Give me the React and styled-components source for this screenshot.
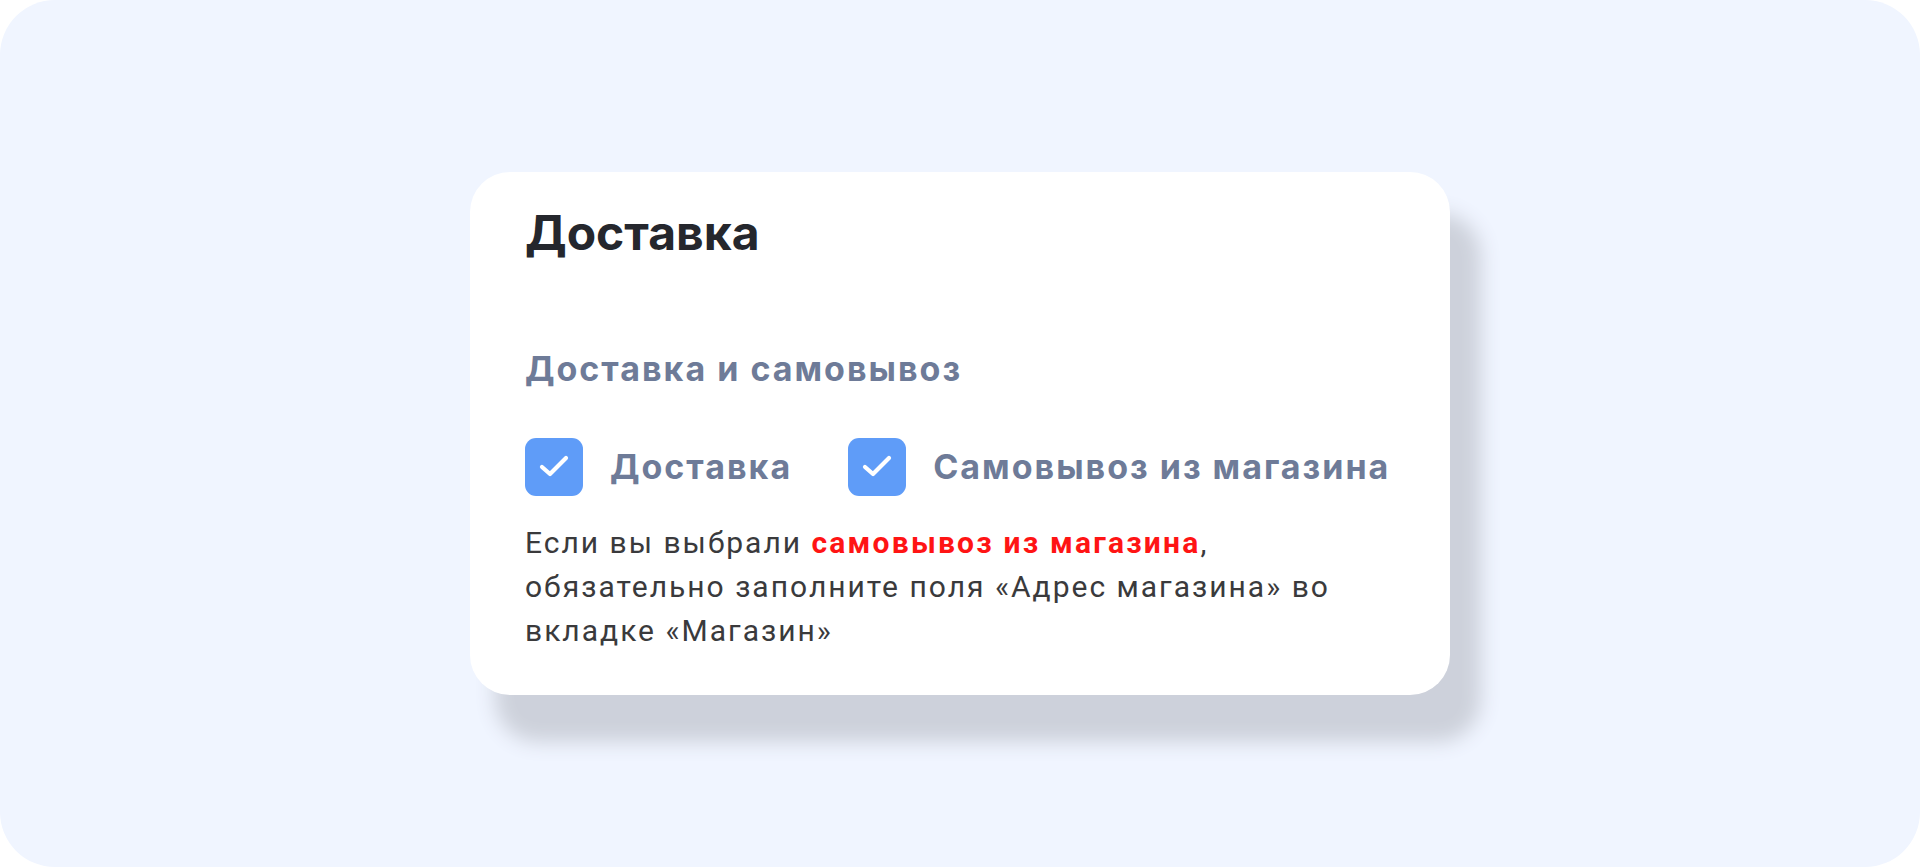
import React from "react";
import styled, { createGlobalStyle } from "styled-components";

const Global = createGlobalStyle`
  html, body { margin: 0; padding: 0; background: #ffffff; }
  body { font-family: Inter, "Noto Sans", sans-serif; }
  * { box-sizing: border-box; }
`;

const Panel = styled.div`
  width: 1920px;
  height: 867px;
  border-radius: 55px;
  background: #f0f5ff;
  display: flex;
  align-items: center;
  justify-content: center;
`;

const Card = styled.section`
  width: 980px;
  height: 523px;
  background: #ffffff;
  border-radius: 40px;
  padding: 32px 55px 0 55px;
  box-shadow: 28px 44px 20px 3px #cdd1db;
  display: flex;
  flex-direction: column;
`;

const Title = styled.h1`
  margin: 0;
  font-family: Inter, sans-serif;
  font-size: 48px;
  line-height: 58px;
  font-weight: 700;
  color: #25272d;
`;

const Subtitle = styled.h2`
  margin: 86px 0 0 0;
  font-family: Inter, sans-serif;
  font-size: 34px;
  line-height: 42px;
  letter-spacing: 2px;
  font-weight: 700;
  color: #6e7b98;
`;

const Options = styled.div`
  margin-top: 48px;
  display: flex;
  align-items: center;
  gap: 56px;
`;

const Option = styled.div`
  display: flex;
  align-items: center;
  gap: 27px;
  cursor: pointer;
`;

const Box = styled.div`
  width: 58px;
  height: 58px;
  border-radius: 11px;
  background: ${(p) => (p.$checked ? "#5f9cf8" : "#ffffff")};
  border: ${(p) => (p.$checked ? "none" : "2px solid #c5cde0")};
  display: flex;
  align-items: center;
  justify-content: center;
  flex-shrink: 0;
`;

const OptionText = styled.span`
  font-family: Inter, sans-serif;
  font-size: 34px;
  line-height: 42px;
  letter-spacing: 2px;
  font-weight: 700;
  color: #6e7b98;
`;

const Note = styled.p`
  margin: 25px 0 0 0;
  font-family: Roboto, "Liberation Sans", sans-serif;
  font-size: 30px;
  line-height: 44px;
  letter-spacing: 2px;
  font-weight: 400;
  color: #3a3a3c;
  max-width: 845px;
`;

const Highlight = styled.strong`
  font-weight: 700;
  letter-spacing: 2.2px;
  color: #ff1414;
`;

function Check() {
  return (
    <svg width="58" height="58" viewBox="0 0 58 58" fill="none">
      <polyline
        points="17,29 25,36 41,20"
        stroke="#ffffff"
        strokeWidth="4.2"
        strokeLinecap="round"
        strokeLinejoin="round"
      />
    </svg>
  );
}

function CheckOption({ label, checked }) {
  return (
    <Option role="checkbox" aria-checked={checked}>
      <Box $checked={checked}>{checked && <Check />}</Box>
      <OptionText>{label}</OptionText>
    </Option>
  );
}

export default function App() {
  return (
    <>
      <Global />
      <Panel>
        <Card>
          <Title>Доставка</Title>
          <Subtitle>Доставка и самовывоз</Subtitle>
          <Options>
            <CheckOption label="Доставка" checked />
            <CheckOption label="Самовывоз из магазина" checked />
          </Options>
          <Note>
            Если вы выбрали <Highlight>самовывоз из магазина</Highlight>,
            обязательно заполните поля «Адрес магазина» во вкладке «Магазин»
          </Note>
        </Card>
      </Panel>
    </>
  );
}
